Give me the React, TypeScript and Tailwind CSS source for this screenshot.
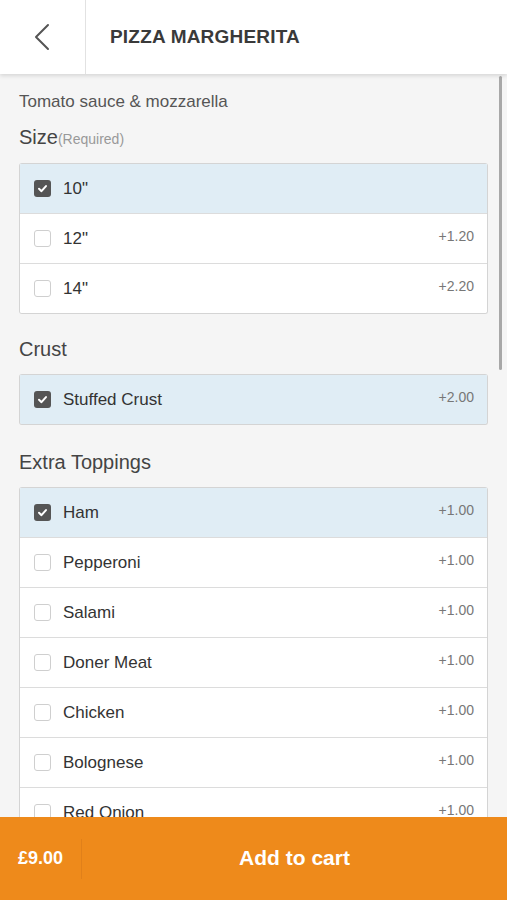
import React from "react";

type Opt = { label: string; price?: string; checked?: boolean };

const sizes: Opt[] = [
  { label: '10"', checked: true },
  { label: '12"', price: "+1.20" },
  { label: '14"', price: "+2.20" },
];
const crust: Opt[] = [{ label: "Stuffed Crust", price: "+2.00", checked: true }];
const toppings: Opt[] = [
  { label: "Ham", price: "+1.00", checked: true },
  { label: "Pepperoni", price: "+1.00" },
  { label: "Salami", price: "+1.00" },
  { label: "Doner Meat", price: "+1.00" },
  { label: "Chicken", price: "+1.00" },
  { label: "Bolognese", price: "+1.00" },
  { label: "Red Onion", price: "+1.00" },
  { label: "Mushrooms", price: "+1.00" },
];

function Check({ checked }: { checked?: boolean }) {
  if (checked) {
    return (
      <div className="w-[17px] h-[17px] rounded-[3px] bg-[#555555] flex items-center justify-center shrink-0">
        <svg width="11" height="11" viewBox="0 0 12 12">
          <path d="M2.2 6.3 L4.9 8.9 L9.8 3.4" fill="none" stroke="#ffffff" strokeWidth="2.2" strokeLinecap="round" strokeLinejoin="round" />
        </svg>
      </div>
    );
  }
  return <div className="w-[17px] h-[17px] rounded-[3px] bg-white border border-[#cfcfcf] shrink-0" />;
}

function List({ items }: { items: Opt[] }) {
  return (
    <div className="mx-[19px] border-x border-b border-[#d4d4d4] rounded-[3px] overflow-hidden bg-white">
      {items.map((o, i) => (
        <div
          key={o.label}
          className={`h-[50px] flex items-center pl-[14px] pr-[13px] border-t ${i > 0 ? "border-[#dcdcdc]" : "border-[#d4d4d4]"} ${o.checked ? "bg-[#e0edf5]" : "bg-white"}`}
        >
          <Check checked={o.checked} />
          <span className="ml-[12px] text-[17px] text-[#333333] flex-1">{o.label}</span>
          {o.price && <span className="text-[14px] text-[#777777] -mt-[4px]">{o.price}</span>}
        </div>
      ))}
    </div>
  );
}

export default function App() {
  return (
    <div
      className="relative w-[507px] h-[900px] flex flex-col bg-[#f5f5f5] overflow-hidden"
      style={{ fontFamily: '"Liberation Sans", Arial, sans-serif' }}
    >
      <header className="relative z-10 h-[74px] bg-white flex shadow-[0_2px_4px_rgba(0,0,0,0.12)] shrink-0">
        <div className="w-[86px] border-r border-[#e2e2e2] flex items-center justify-center">
          <svg width="20" height="28" viewBox="0 0 20 28">
            <path d="M15 2 L3 14 L15 26" fill="none" stroke="#555555" strokeWidth="2" strokeLinecap="round" strokeLinejoin="round" />
          </svg>
        </div>
        <div className="flex items-center pl-[24px] text-[19px] font-bold text-[#3a3a3a] tracking-[0.2px]">
          PIZZA MARGHERITA
        </div>
      </header>

      <main className="flex-1 overflow-hidden pt-[18px]">
        <p className="mx-[19px] text-[17px] leading-[20px] text-[#555555]">Tomato sauce &amp; mozzarella</p>
        <h2 className="mx-[19px] mt-[13px] mb-[12px] leading-[24px] text-[#444444]">
          <span className="text-[20px]">Size</span>
          <span className="text-[14px] text-[#999999]">(Required)</span>
        </h2>
        <List items={sizes} />
        <h2 className="mx-[19px] mt-[23px] mb-[13px] leading-[24px] text-[20px] text-[#444444]">Crust</h2>
        <List items={crust} />
        <h2 className="mx-[19px] mt-[25px] mb-[13px] leading-[24px] text-[20px] text-[#444444]">Extra Toppings</h2>
        <List items={toppings} />
      </main>

      <div className="absolute right-[5px] top-[76px] w-[3px] h-[294px] rounded-full bg-[#a8a8a8]" />

      <footer className="h-[83px] bg-[#ee8a1b] flex items-center shrink-0 text-white font-bold">
        <div className="w-[82px] h-[40px] flex items-center pl-[18px] text-[18px] border-r border-[#e0801a]">£9.00</div>
        <div className="flex-1 text-center text-[21px] -mt-[2px]">Add to cart</div>
      </footer>
    </div>
  );
}
